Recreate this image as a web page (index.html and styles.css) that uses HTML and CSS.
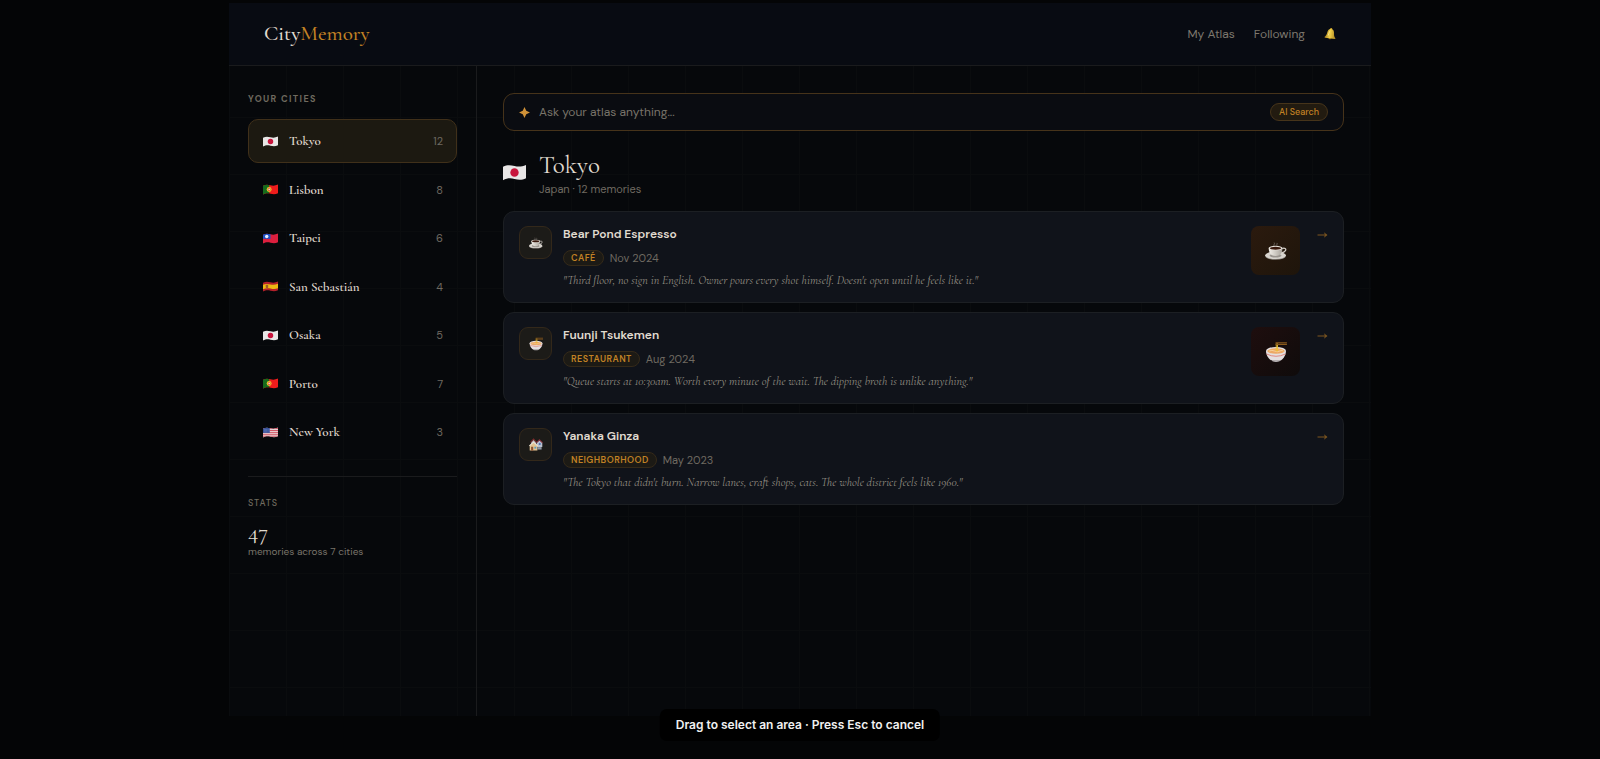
FILE: index.html
```html
<!DOCTYPE html>
<html lang="en">
<head>
  <meta charset="UTF-8" />
  <title>CityMemory</title>
  <meta name="viewport" content="width=device-width, initial-scale=1.0" />
  <link rel="stylesheet" href="styles.css">
</head>
<body>

  <!-- shared icons -->
  <svg class="sprite" aria-hidden="true">
    <defs>
      <clipPath id="wave">
        <path d="M0 2.5 C4 .5 7 .8 11 1.8 S18 2.4 22 .8 V13.5 C18 15.4 15 15.2 11 14.2 S4 13.4 0 15.4Z" />
      </clipPath>
      <linearGradient id="bellGold" x1="0" x2="1">
        <stop offset="0" stop-color="#a8801c" />
        <stop offset=".45" stop-color="#f0cf4a" />
        <stop offset="1" stop-color="#a8801c" />
      </linearGradient>
      <linearGradient id="china" x1="0" x2="1">
        <stop offset="0" stop-color="#f2efe9" />
        <stop offset="1" stop-color="#a9a49c" />
      </linearGradient>
    </defs>
    <symbol id="flag-jp" viewBox="0 0 22 16">
      <g clip-path="url(#wave)">
        <rect width="22" height="16" fill="#e8e6e6" />
        <ellipse cx="11" cy="8" rx="4" ry="4.1" fill="#c8153c" />
      </g>
    </symbol>
    <symbol id="flag-pt" viewBox="0 0 22 16">
      <g clip-path="url(#wave)">
        <rect width="22" height="16" fill="#ee1c1c" />
        <rect width="9" height="16" fill="#156b1c" />
        <circle cx="9" cy="8" r="3.6" fill="#e5c52c" />
        <rect x="7.2" y="6" width="3.6" height="4" rx="1" fill="#d33" />
        <rect x="8" y="6.8" width="2" height="2.2" fill="#eee" />
      </g>
    </symbol>
    <symbol id="flag-tw" viewBox="0 0 22 16">
      <g clip-path="url(#wave)">
        <rect width="22" height="16" fill="#dc1f3e" />
        <rect width="11" height="8.5" fill="#1b50c4" />
        <circle cx="5.5" cy="5" r="2.5" fill="#e8eefc" />
      </g>
    </symbol>
    <symbol id="flag-es" viewBox="0 0 22 16">
      <g clip-path="url(#wave)">
        <rect width="22" height="16" fill="#b3202a" />
        <path d="M0 5.6 C4 3.6 7 4 11 5 S18 5.4 22 4 V10.6 C18 12.2 15 12 11 11 S4 10.2 0 12Z" fill="#edb812" />
        <rect x="4" y="5.5" width="3.6" height="4.6" rx="1" fill="#9c5a2a" />
      </g>
    </symbol>
    <symbol id="flag-us" viewBox="0 0 22 16">
      <g clip-path="url(#wave)">
        <rect width="22" height="16" fill="#e9dede" />
        <path d="M0 2.2h22M0 5h22M0 7.8h22M0 10.6h22M0 13.4h22" stroke="#cf4a5c" stroke-width="1.4" />
        <rect width="10" height="8.6" fill="#34519b" />
        <path d="M1.5 3.5h8M1.5 5.3h8M1.5 7.1h8" stroke="#a9b8de" stroke-width=".7" stroke-dasharray=".8 1" />
      </g>
    </symbol>
    <symbol id="bell" viewBox="0 0 14 14">
      <g transform="rotate(8 7 7)">
        <circle cx="7" cy="1.7" r="1.2" fill="#d8ac2c" />
        <path d="M7 1.6c-2.6 0-3.5 2-3.7 4.4C3.1 8.7 2.4 9.5 1.2 10.8c-.3.5 0 .9.5.9h10.6c.5 0 .8-.4.5-.9C11.6 9.5 10.9 8.7 10.7 6 10.5 3.6 9.6 1.6 7 1.6Z" fill="url(#bellGold)" />
        <path d="M5.4 11.7a1.7 1.5 0 0 0 3.2 0Z" fill="#c08f1c" />
        <path d="M5.6 4.2C5.2 5.4 5.2 7.6 4.7 9" fill="none" stroke="#fff0a0" stroke-width=".8" />
      </g>
    </symbol>
    <symbol id="cup" viewBox="0 0 24 20">
      <path d="M10 4.5C8.5 3.4 11.5 2.2 10 .8M13 4.2c-1-1 1-1.6 0-3" fill="none" stroke="#77706a" stroke-width=".9" />
      <ellipse cx="11.5" cy="15.4" rx="11.3" ry="4.2" fill="#8f8a84" />
      <ellipse cx="11.5" cy="14.7" rx="11.3" ry="4" fill="#d8d4ce" />
      <ellipse cx="11.5" cy="15" rx="6.5" ry="2.2" fill="#9a958f" />
      <path d="M18.5 7.4c3-1.4 5 .2 3.8 2.2-.8 1.4-2.5 2.2-4.8 2.4" fill="none" stroke="#d5d0c9" stroke-width="1.3" />
      <path d="M4 6.8c0 5 2.5 8.6 7.5 8.6S19 11.8 19 6.8Z" fill="url(#china)" />
      <ellipse cx="11.5" cy="6.8" rx="7.5" ry="2.5" fill="#e6e2dc" />
      <ellipse cx="11.5" cy="7" rx="6.2" ry="1.7" fill="#38180c" />
    </symbol>
    <symbol id="bowl" viewBox="0 0 24 22">
      <path d="M1 9.5a11 4 0 0 1 22 0c0 6-4 10-7 11.2H8C5 19.5 1 15.5 1 9.5Z" fill="#e4dfe0" />
      <path d="M8 20.7h8v.6q-4 1.2-8 0Z" fill="#b8b4b6" />
      <ellipse cx="12" cy="10" rx="9.6" ry="3" fill="#eda865" />
      <path d="M4.5 10q3-1.6 6 0t6-.2 3.4.6" fill="none" stroke="#f7d5a0" stroke-width="1" />
      <path d="M1.6 13.2q10.4 5 20.8 0" fill="none" stroke="#de8078" stroke-width="1" />
      <path d="M12.3 1.5v9M13.7 1.5v8.6" stroke="#ecc12f" stroke-width="1" />
      <path d="M11.5 1H24M11.5 2.8H24" stroke="#8a5a1c" stroke-width="1.2" />
    </symbol>
    <symbol id="houses" viewBox="0 0 20 18">
      <path d="M3 5 6.5 1 10 5v4H3Z" fill="#a9adb2" />
      <path d="M2.2 5.4 6.5.6l4.3 4.8" fill="none" stroke="#7a2c2c" stroke-width="1.6" />
      <path d="M11 5.6 15 2l4 3.6V12h-8Z" fill="#b9c1cf" />
      <path d="M10.5 6 15 1.6 19.5 6" fill="none" stroke="#7a2c34" stroke-width="1.5" />
      <rect x="14" y="6" width="2.6" height="3" fill="#5275b8" />
      <path d="M1 9.6 6.5 5 12 9.6V17H1Z" fill="#e2c391" />
      <path d="M.5 10.2 6.5 4.8l6 5.4" fill="none" stroke="#e8e2d8" stroke-width="1.5" />
      <rect x="3" y="11.5" width="3" height="5.5" fill="#8b5030" />
      <rect x="7.7" y="11.5" width="2.6" height="2.6" fill="#4f9bc4" />
      <path d="M12 12h6v3.5h-6Z" fill="#8f97a3" />
    </symbol>
    <symbol id="arrow" viewBox="0 0 10 8">
      <path d="M0 4h9" stroke="currentColor" stroke-width="1.1" />
      <path d="M6.5 1.3 10 4 6.5 6.7 7.4 4Z" fill="currentColor" />
    </symbol>
  </svg>

  <div class="app">
    <header class="topbar">
      <a class="logo" href="#">City<span>Memory</span></a>
      <nav class="nav">
        <a href="#">My Atlas</a>
        <a href="#">Following</a>
        <button class="bell" type="button" aria-label="Notifications"><svg><use href="#bell" /></svg></button>
      </nav>
    </header>

    <div class="layout">
      <aside class="sidebar">
        <h2 class="label">Your Cities</h2>
        <div class="cities">
          <button class="city active" type="button"><svg class="flag"><use href="#flag-jp" /></svg>Tokyo<span class="count">12</span></button>
          <button class="city" type="button"><svg class="flag"><use href="#flag-pt" /></svg>Lisbon<span class="count">8</span></button>
          <button class="city" type="button"><svg class="flag"><use href="#flag-tw" /></svg>Taipei<span class="count">6</span></button>
          <button class="city" type="button"><svg class="flag"><use href="#flag-es" /></svg>San Sebastián<span class="count">4</span></button>
          <button class="city" type="button"><svg class="flag"><use href="#flag-jp" /></svg>Osaka<span class="count">5</span></button>
          <button class="city" type="button"><svg class="flag"><use href="#flag-pt" /></svg>Porto<span class="count">7</span></button>
          <button class="city" type="button"><svg class="flag"><use href="#flag-us" /></svg>New York<span class="count">3</span></button>
        </div>
        <div class="stats">
          <h2 class="label label-light">Stats</h2>
          <p class="stat-number">47</p>
          <p class="stat-text">memories across 7 cities</p>
        </div>
      </aside>

      <main class="content">
        <form class="search">
          <svg class="spark" viewBox="0 0 10 10"><path d="M5 0 6.6 3.4 10 5 6.6 6.6 5 10 3.4 6.6 0 5 3.4 3.4Z" fill="currentColor" /></svg>
          <input type="text" placeholder="Ask your atlas anything..." aria-label="Ask your atlas anything" />
          <button class="ai-btn" type="button">AI Search</button>
        </form>

        <div class="city-head">
          <svg class="flag-lg"><use href="#flag-jp" /></svg>
          <div>
            <h1>Tokyo</h1>
            <p>Japan · 12 memories</p>
          </div>
        </div>

        <div class="memories">
          <article class="card">
            <div class="card-icon"><svg><use href="#cup" /></svg></div>
            <div class="card-body">
              <h3>Bear Pond Espresso</h3>
              <div class="meta"><span class="tag">Café</span><span class="date">Nov 2024</span></div>
              <p class="quote">"Third floor, no sign in English. Owner pours every shot himself. Doesn't open until he feels like it."</p>
            </div>
            <div class="thumb thumb-cafe"><svg><use href="#cup" /></svg></div>
            <a class="open" href="#" aria-label="Open Bear Pond Espresso"><svg><use href="#arrow" /></svg></a>
          </article>

          <article class="card">
            <div class="card-icon"><svg><use href="#bowl" /></svg></div>
            <div class="card-body">
              <h3>Fuunji Tsukemen</h3>
              <div class="meta"><span class="tag">Restaurant</span><span class="date">Aug 2024</span></div>
              <p class="quote">"Queue starts at 10:30am. Worth every minute of the wait. The dipping broth is unlike anything."</p>
            </div>
            <div class="thumb thumb-ramen"><svg><use href="#bowl" /></svg></div>
            <a class="open" href="#" aria-label="Open Fuunji Tsukemen"><svg><use href="#arrow" /></svg></a>
          </article>

          <article class="card">
            <div class="card-icon"><svg><use href="#houses" /></svg></div>
            <div class="card-body">
              <h3>Yanaka Ginza</h3>
              <div class="meta"><span class="tag">Neighborhood</span><span class="date">May 2023</span></div>
              <p class="quote">"The Tokyo that didn't burn. Narrow lanes, craft shops, cats. The whole district feels like 1960."</p>
            </div>
            <a class="open" href="#" aria-label="Open Yanaka Ginza"><svg><use href="#arrow" /></svg></a>
          </article>
        </div>
      </main>
    </div>
  </div>

  <div class="toast">Drag to select an area · Press Esc to cancel</div>

</body>
</html>
```

FILE: styles.css
```css
* {
  box-sizing: border-box;
}

body {
  margin: 0;
  padding-top: 3px;
  background: #040506;
  color: #e0dbd0;
  font-family: "DM Sans", Inter, sans-serif;
  font-size: 12px;
}

h1, h2, h3, p {
  margin: 0;
  font-weight: 400;
}

a {
  color: inherit;
  text-decoration: none;
}

button {
  margin: 0;
  padding: 0;
  border: none;
  background: none;
  color: inherit;
  font: inherit;
  cursor: pointer;
}

svg {
  display: block;
}

.sprite {
  position: absolute;
  width: 0;
  height: 0;
}

.app {
  display: flex;
  flex-direction: column;
  max-width: 1142px;
  min-height: calc(100vh - 46px);
  margin: 0 auto;
  background-color: #06080b;
  background-image:
    linear-gradient(#0a0c0e 1px, transparent 1px),
    linear-gradient(90deg, #0a0c0e 1px, transparent 1px);
  background-size: 57px 57px;
}

/* top bar */
.topbar {
  display: flex;
  align-items: center;
  justify-content: space-between;
  padding: 17px 34px 17px 35px;
  background: #080b12;
  border-bottom: 1px solid #1a1b1d;
}

.logo {
  font-family: "Cormorant Garamond", "Liberation Serif", serif;
  font-size: 21px;
  font-weight: 500;
  line-height: 28px;
}

.logo span {
  color: #c28224;
}

.nav {
  display: flex;
  align-items: center;
  gap: 19px;
  color: #7d786e;
}

.bell svg {
  width: 13px;
  height: 14px;
}

.layout {
  display: flex;
  flex: 1;
}

/* sidebar */
.sidebar {
  flex: none;
  width: 248px;
  padding: 26px 19px;
  border-right: 1px solid #1a1b1d;
}

.label {
  color: #6f6a5f;
  font-size: 9px;
  font-weight: 700;
  line-height: 14px;
  letter-spacing: 0.15em;
  text-transform: uppercase;
}

.label-light {
  font-weight: 500;
  letter-spacing: 0.1em;
}

.cities {
  display: flex;
  flex-direction: column;
  justify-content: space-between;
  min-height: 335px;
  margin-top: 13px;
}

.city {
  display: flex;
  align-items: center;
  gap: 11px;
  height: 44px;
  padding: 0 13px 0 14px;
  border: 1px solid transparent;
  border-radius: 10px;
  font-family: "Cormorant Garamond", "Liberation Serif", serif;
  font-size: 13px;
  font-weight: 600;
  text-align: left;
}

.city.active {
  background: #1c1911;
  border-color: #40301a;
}

.flag {
  width: 15px;
  height: 11px;
}

.count {
  margin-left: auto;
  color: #6f6a61;
  font-family: "DM Sans", Inter, sans-serif;
  font-size: 11px;
  font-weight: 400;
}

.stats {
  margin-top: 22px;
  padding-top: 19px;
  border-top: 1px solid #1a1b1d;
}

.stat-number {
  margin-top: 10px;
  font-family: "Cormorant Garamond", "Liberation Serif", serif;
  font-size: 23px;
  line-height: 24px;
}

.stat-text {
  margin-top: 2px;
  color: #79746a;
  font-size: 10px;
  line-height: 12px;
}

/* main column */
.content {
  flex: 1;
  min-width: 0;
  padding: 27px 27px 27px 26px;
}

.search {
  display: flex;
  align-items: center;
  gap: 9px;
  height: 38px;
  padding: 0 15px;
  background: #0a0c11;
  border: 1px solid #46331a;
  border-radius: 11px;
}

.spark {
  width: 11px;
  height: 11px;
  color: #d09238;
}

.search input {
  flex: 1;
  min-width: 0;
  padding: 0;
  border: none;
  outline: none;
  background: none;
  color: #e0dbd0;
  font: inherit;
}

.search input::placeholder {
  color: #79746a;
  opacity: 1;
}

.ai-btn {
  height: 18px;
  padding: 0 8px;
  background: #221b10;
  border: 1px solid #46341a;
  border-radius: 9px;
  color: #c28224;
  font-size: 9px;
  font-weight: 500;
}

.city-head {
  display: flex;
  align-items: flex-start;
  gap: 13px;
  margin-top: 19px;
}

.flag-lg {
  width: 23px;
  height: 17px;
  margin-top: 14px;
}

.city-head h1 {
  font-family: "Cormorant Garamond", "Liberation Serif", serif;
  font-size: 25px;
  line-height: 31px;
}

.city-head p {
  color: #6f6a61;
  font-size: 11px;
  line-height: 17px;
}

.memories {
  display: flex;
  flex-direction: column;
  gap: 9px;
  margin-top: 13px;
}

.card {
  display: flex;
  align-items: flex-start;
  padding: 14px 15px 13px;
  background: #10131a;
  border: 1px solid #1c1f23;
  border-radius: 11px;
}

.card-icon {
  display: flex;
  align-items: center;
  justify-content: center;
  width: 33px;
  height: 33px;
  margin-right: 11px;
  background: #1c1b18;
  border: 1px solid #33281a;
  border-radius: 9px;
}

.card-icon svg {
  width: 14px;
  height: 14px;
}

.card-body {
  flex: 1;
  min-width: 0;
}

.card h3 {
  font-size: 12px;
  font-weight: 600;
  line-height: 16px;
}

.meta {
  display: flex;
  align-items: center;
  gap: 6px;
  margin-top: 8px;
}

.tag {
  padding: 0 7px;
  background: #1c1a15;
  border: 1px solid #352a19;
  border-radius: 8px;
  color: #c28224;
  font-size: 9px;
  font-weight: 600;
  line-height: 14px;
  letter-spacing: 0.05em;
  text-transform: uppercase;
}

.date {
  color: #6f6a61;
  font-size: 11px;
}

.quote {
  margin-top: 5px;
  color: #959084;
  font-family: "Cormorant Garamond", "Liberation Serif", serif;
  font-size: 12px;
  font-style: italic;
  line-height: 18px;
}

.thumb {
  display: flex;
  align-items: center;
  justify-content: center;
  width: 49px;
  height: 49px;
  margin-left: 12px;
  border-radius: 8px;
}

.thumb svg {
  width: 22px;
  height: 20px;
}

.thumb-cafe {
  background: linear-gradient(135deg, #2b1a0e, #1e150b);
}

.thumb-ramen {
  background: linear-gradient(135deg, #1e0e0e, #0f0b0b);
}

.open {
  margin: 5px 0 0 17px;
  color: #75511f;
}

.open svg {
  width: 11px;
  height: 8px;
}

/* selection hint */
.toast {
  position: fixed;
  bottom: 18px;
  left: 50%;
  padding: 8px 16px;
  transform: translateX(-50%);
  background: #000;
  border-radius: 7px;
  color: #f0f0f0;
  font-family: Inter, sans-serif;
  font-size: 12px;
  font-weight: 600;
  line-height: 16px;
  white-space: nowrap;
}
```
